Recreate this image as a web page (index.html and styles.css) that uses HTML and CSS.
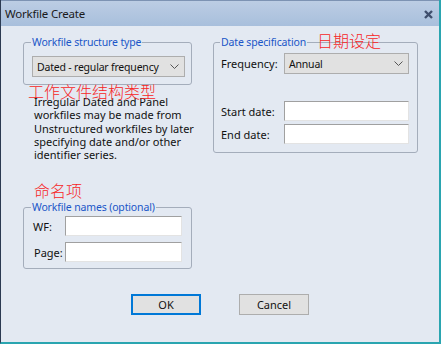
FILE: index.html
```
<!DOCTYPE html>
<html lang="en">
<head>
    <meta charset="UTF-8">
    <meta name="viewport" content="width=device-width, initial-scale=1.0">
    <title>Workfile Create</title>
    <link rel="stylesheet" href="styles.css">
</head>
<body>
    <div class="window">
        <div class="titlebar">
            <span class="title">Workfile Create</span>
            <svg class="close" width="9" height="9" viewBox="0 0 9 9">
                <path d="M1 1 L8 8 M8 1 L1 8" stroke="#3f4f6d" stroke-width="2.4" fill="none"/>
            </svg>
        </div>

        <div class="content">
            <div class="columns">
                <div class="col-left">
                    <fieldset class="group group-structure">
                        <legend>Workfile structure type</legend>
                        <div class="select select-structure">
                            <span>Dated - regular frequency</span>
                            <svg width="9" height="5" viewBox="0 0 9 5"><path d="M0.5 0.5 L4.5 4.5 L8.5 0.5" stroke="#555" fill="none"/></svg>
                        </div>
                    </fieldset>

                    <p class="hint">Irregular Dated and Panel<br>workfiles may be made from<br>Unstructured workfiles by later<br>specifying date and/or other<br>identifier series.</p>

                    <fieldset class="group group-names">
                        <legend>Workfile names (optional)</legend>
                        <div class="row">
                            <label class="label-wf">WF:</label>
                            <div class="input"></div>
                        </div>
                        <div class="row">
                            <label class="label-page">Page:</label>
                            <div class="input"></div>
                        </div>
                    </fieldset>
                </div>

                <div class="col-right">
                    <fieldset class="group group-date">
                        <legend>Date specification</legend>
                        <div class="row row-freq">
                            <label>Frequency:</label>
                            <div class="select select-freq">
                                <span>Annual</span>
                                <svg width="9" height="5" viewBox="0 0 9 5"><path d="M0.5 0.5 L4.5 4.5 L8.5 0.5" stroke="#555" fill="none"/></svg>
                            </div>
                        </div>
                        <div class="row row-start">
                            <label>Start date:</label>
                            <div class="input"></div>
                        </div>
                        <div class="row row-end">
                            <label>End date:</label>
                            <div class="input"></div>
                        </div>
                    </fieldset>
                </div>
            </div>

            <div class="buttons">
                <button class="btn btn-default">OK</button>
                <button class="btn">Cancel</button>
            </div>
        </div>

        <!-- red annotations drawn over the dialog -->
        <span class="note note-date">日期设定</span>
        <span class="note note-structure">工作文件结构类型</span>
        <span class="note note-names">命名项</span>
    </div>
</body>
</html>
```

FILE: styles.css
```
body {
    margin: 0;
    font-family: "Noto Sans", "DejaVu Sans", sans-serif;
    font-size: 11px;
    color: #111;
}
.window {
    position: relative;
    width: 441px;
    height: 344px;
    box-sizing: border-box;
    background-color: #e3e9f2;
    border-left: 1px solid #2b3a52;
    border-right: 2px solid #2aa5b0;
    border-bottom: 2px solid #2aa5b0;
    display: flex;
    flex-direction: column;
}
.titlebar {
    height: 26px;
    flex: none;
    display: flex;
    align-items: center;
    justify-content: space-between;
    padding: 0 6px 0 4px;
    background: linear-gradient(#bccde4, #a8bfdc);
    border-top: 1px solid #7d93b3;
    box-sizing: border-box;
}
.title {
    font-size: 11.5px;
    letter-spacing: -0.2px;
    color: #1a1a1a;
}
.close {
    margin-top: 2px;
}
.content {
    flex: 1;
    display: flex;
    flex-direction: column;
    padding: 9px 0 0 22px;
}
.columns {
    display: flex;
    gap: 21px;
}
.col-left {
    width: 169px;
    display: flex;
    flex-direction: column;
}
.col-right {
    width: 205px;
}
.group {
    margin: 0;
    border: 1px solid #a4adbb;
    border-radius: 3px;
    min-width: 0;
}
.group legend {
    padding: 0 1px;
    line-height: 15px;
    color: #1a56c8;
    font-size: 10.5px;
    letter-spacing: -0.15px;
}
.group-structure {
    padding: 6px 6px 7px 8px;
}
.group-structure legend {
    margin-left: -1px;
}
.select {
    display: flex;
    align-items: center;
    justify-content: space-between;
    height: 21px;
    box-sizing: border-box;
    padding: 0 5px 0 4px;
    background-color: #e1e1e1;
    border: 1px solid #adadad;
}
.select span {
    font-size: 10.5px;
    letter-spacing: -0.2px;
    white-space: nowrap;
}
.select svg {
    flex: none;
}
.hint {
    margin: 10px 0 0 11px;
    line-height: 13.3px;
    white-space: nowrap;
}
.group-names {
    margin-top: 39px;
    padding: 1px 9px 6px 9px;
}
.group-names legend {
    margin-left: -2px;
}
.row {
    display: flex;
    align-items: center;
    justify-content: space-between;
}
.group-names .row + .row {
    margin-top: 6px;
}
.label-page {
    margin-left: 1px;
}
.input {
    height: 20px;
    box-sizing: border-box;
    background-color: #fff;
    border: 1px solid #a0a0a0;
    border-right-color: #e3e3e3;
    border-bottom-color: #e3e3e3;
}
.group-names .input {
    width: 117px;
}
.group-date {
    padding: 3px 8px 8px 7px;
}
.group-date legend {
    margin-left: -1px;
}
.group-date .input,
.select-freq {
    width: 125px;
}
.row-start {
    margin-top: 27px;
}
.row-end {
    margin-top: 3px;
}
.buttons {
    display: flex;
    gap: 38px;
    margin: 25px 0 0 108px;
}
.btn {
    width: 70px;
    height: 21px;
    box-sizing: border-box;
    font-family: inherit;
    font-size: 11px;
    color: #111;
    background-color: #e1e1e1;
    border: 1px solid #adadad;
    padding: 0;
}
.btn-default {
    border: 2px solid #0078d7;
}
.note {
    position: absolute;
    font-family: "Noto Sans CJK SC", sans-serif;
    font-weight: 300;
    font-size: 16px;
    line-height: 18px;
    color: #f62626;
}
.note-date {
    left: 316px;
    top: 31px;
}
.note-structure {
    left: 27px;
    top: 82px;
}
.note-names {
    left: 33px;
    top: 181px;
}
```
